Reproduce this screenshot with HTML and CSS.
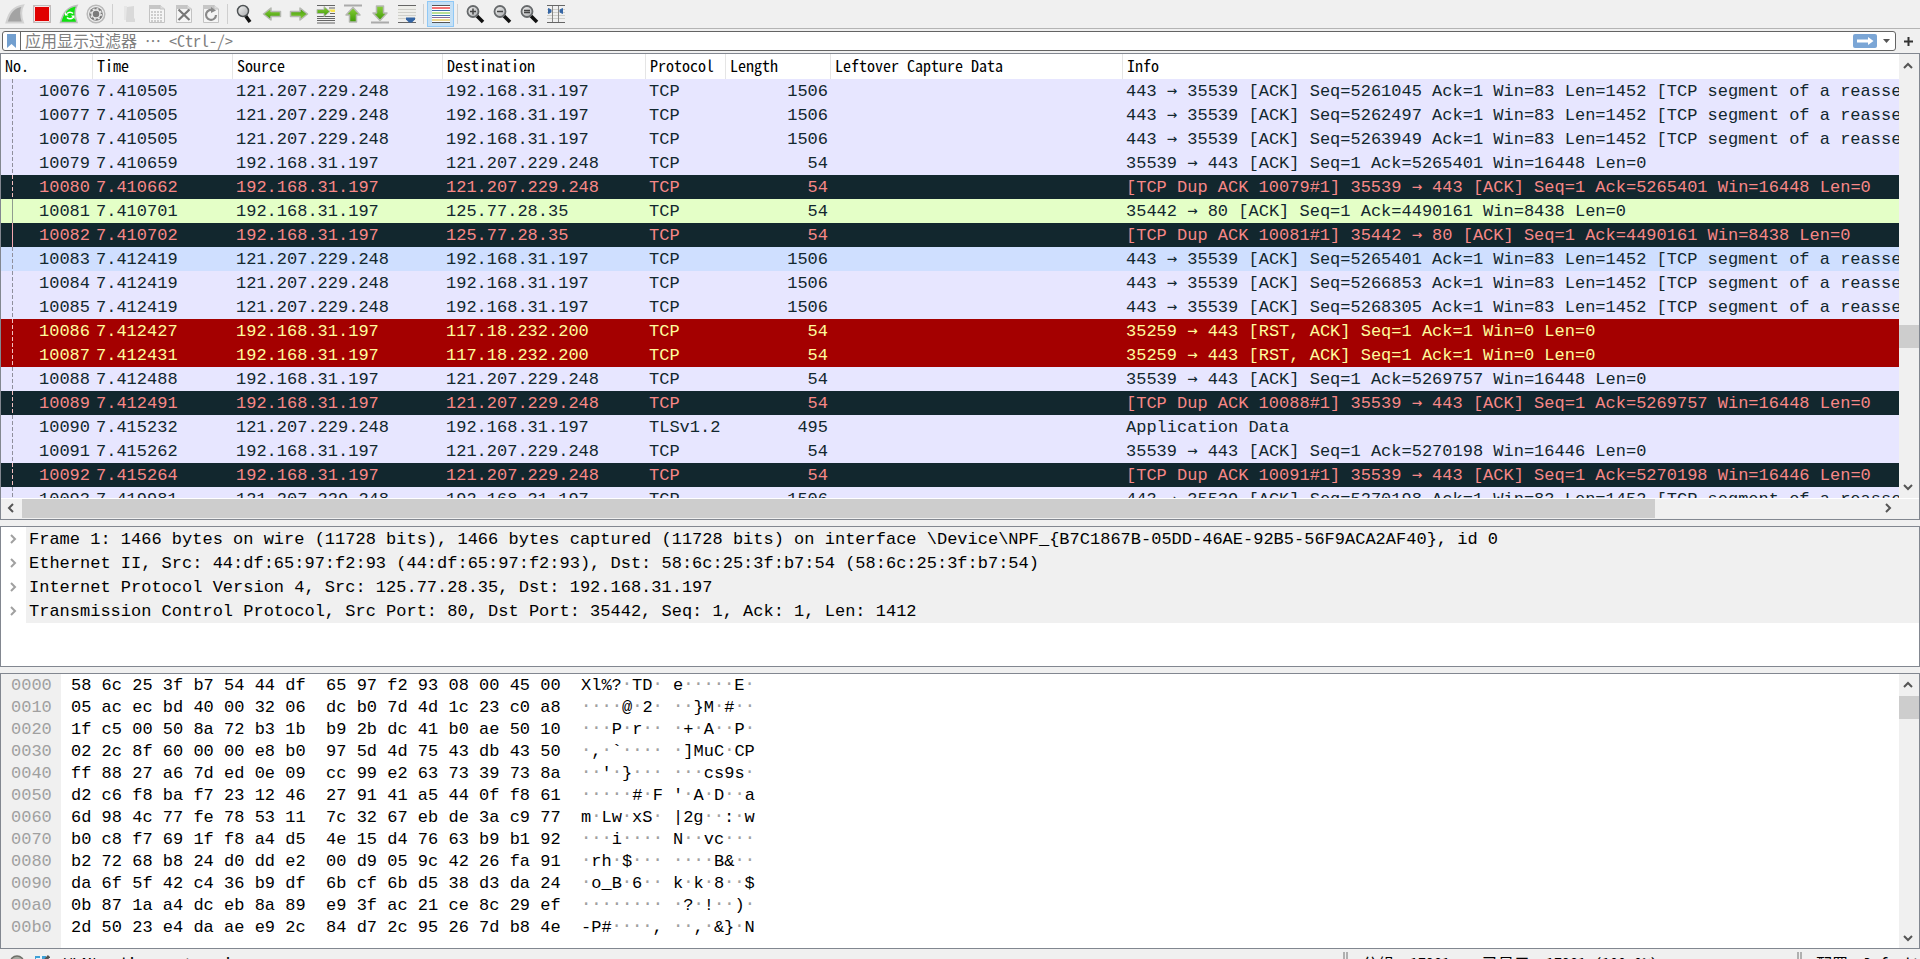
FILE: index.html
```
<!DOCTYPE html>
<html lang="zh-CN">
<head>
<meta charset="utf-8">
<title>WLAN</title>
<link rel="stylesheet" href="styles.css">
</head>
<body>
<svg width="0" height="0" class="defs" aria-hidden="true">
  <defs>
    <linearGradient id="green" x1="0" y1="0" x2="0" y2="1"><stop offset="0" stop-color="#8ad03a"/><stop offset="1" stop-color="#3f9a06"/></linearGradient>
    <linearGradient id="lens" x1="0" y1="0" x2="1" y2="1"><stop offset="0" stop-color="#f4f4f4"/><stop offset="1" stop-color="#a8aaac"/></linearGradient>
    <symbol id="arrow" viewBox="0 0 20 20"><path d="M1.500 10L9 4V7.500H18.500V12.500H9V16Z" fill="url(#green)" stroke="#b5b8b1" stroke-width="1.500" stroke-linejoin="round"/></symbol>
    <symbol id="mag" viewBox="0 0 20 20"><path d="M12 12L18 18" stroke="#111" stroke-width="3.500"/><circle cx="8" cy="7.500" r="5.500" fill="url(#lens)" stroke="#66696b" stroke-width="1.800"/></symbol>
    <symbol id="sheet" viewBox="0 0 20 20"><path d="M2.500 1.500H13L17.500 5V18.500H2.500Z" fill="#f5f5f5" stroke="#c3c3c3"/><path d="M2 1H13V5H2Z" fill="#c6c6c6"/><path d="M13 1V5H17.500" fill="#ddd" stroke="#c3c3c3"/></symbol>
  </defs>
</svg>
<div class="app">
  <div class="toolbar" role="toolbar">
    <button class="tool" aria-label="开始捕获"><svg viewBox="0 0 20 20"><path d="M1.500 18.500C4 9 8 3 18 1.500C15 7 16 13 18 18.500Z" fill="#a3a3a3" stroke="#d2d2d2" stroke-width="2"/></svg></button>
    <button class="tool" aria-label="停止捕获"><svg viewBox="0 0 20 20"><path d="M1.500 1.500H18.500V18.500H1.500Z" fill="#e00000" stroke="#bdbdbd"/><path d="M2.500 2.500H17.500V17.500H2.500Z" fill="none" stroke="#f6e4e4"/></svg></button>
    <button class="tool" aria-label="重新开始"><svg viewBox="0 0 20 20"><path d="M1.500 18.500C4 9 8 3 18 1.500C15 7 16 13 18 18.500Z" fill="#10e010" stroke="#bdbdbd" stroke-width="1.500"/><path d="M8 9.500A4 4 0 0 1 14 9.500M14 13.500A4 4 0 0 1 8 13.500" fill="none" stroke="#fff" stroke-width="1.500"/><path d="M6 8V11.500H9.500ZM15.500 15V11.500H12Z" fill="#fff"/></svg></button>
    <button class="tool" aria-label="捕获选项"><svg viewBox="0 0 20 20"><circle cx="10" cy="10" r="8.800" fill="#ededed" stroke="#b8b8b8" stroke-width="1.500"/><circle cx="10" cy="10" r="6.800" fill="#7b7b7b"/><circle cx="10" cy="10" r="4" fill="none" stroke="#e9e9e9" stroke-width="1.500"/><circle cx="10" cy="10" r="5.200" fill="none" stroke="#e9e9e9" stroke-width="1.500" stroke-dasharray="2 2.080"/></svg></button>
    <span class="sep"></span>
    <button class="tool" aria-label="打开"><svg viewBox="0 0 20 20"><path d="M4 2H7V16H4Z" fill="#e6e6e6"/><path d="M7 3L14 2V14L15 15V18H6V16Z" fill="#d9d9d9"/></svg></button>
    <button class="tool" aria-label="保存"><svg viewBox="0 0 20 20"><use href="#sheet"/><path d="M4 8H16M4 11H16M4 14H16M4 17H16" stroke="#cdcdcd" stroke-width="2" stroke-dasharray="2 1"/></svg></button>
    <button class="tool" aria-label="关闭"><svg viewBox="0 0 20 20"><use href="#sheet"/><path d="M4.500 5.500L15.500 16M15.500 5.500L4.500 16" stroke="#777" stroke-width="2.200"/></svg></button>
    <button class="tool" aria-label="重新加载"><svg viewBox="0 0 20 20"><use href="#sheet"/><path d="M12.500 6.500A5 5 0 1 0 15 11" fill="none" stroke="#8a8a8a" stroke-width="2.200"/><path d="M10 3L15 6.500L10 9Z" fill="#8a8a8a"/></svg></button>
    <span class="sep"></span>
    <button class="tool" aria-label="查找"><svg viewBox="0 0 20 20"><path d="M10 11L15 18" stroke="#111" stroke-width="3.500"/><circle cx="8" cy="7" r="5.500" fill="url(#lens)" stroke="#4f5355" stroke-width="1.500"/></svg></button>
    <button class="tool" aria-label="后退"><svg viewBox="0 0 20 20"><use href="#arrow"/></svg></button>
    <button class="tool" aria-label="前进"><svg viewBox="0 0 20 20"><use href="#arrow" transform="rotate(180 10 10)"/></svg></button>
    <button class="tool" aria-label="转到分组"><svg viewBox="0 0 20 20"><path d="M1 1.500H19M13 4H19M1 14.500H19M1 16.500H19M1 19H19M1 12.500H19M14 9.500H19" stroke="#656565" stroke-width="1.200"/><path d="M13 5.500H19V8H15Z" fill="#f7e34f"/><path d="M1 5.500H8V2.500L14 7.500L8 12.500V9.500H1Z" fill="url(#green)" stroke="#b5b8b1"/></svg></button>
    <button class="tool" aria-label="首个分组"><svg viewBox="0 0 20 20"><path d="M1 1.500H19" stroke="#aaa" stroke-width="2"/><path d="M10 3.500L17 11H13.500V18H6.500V11H3Z" fill="url(#green)" stroke="#b5b8b1" stroke-width="1.500" stroke-linejoin="round"/></svg></button>
    <button class="tool" aria-label="最新分组"><svg viewBox="0 0 20 20"><path d="M1 18.500H19" stroke="#aaa" stroke-width="2"/><path d="M10 16.500L17 9H13.500V2H6.500V9H3Z" fill="url(#green)" stroke="#b5b8b1" stroke-width="1.500" stroke-linejoin="round"/></svg></button>
    <button class="tool" aria-label="自动滚动"><svg viewBox="0 0 20 20"><path d="M1 2V16H19V2Z" fill="#eeeeea"/><path d="M1 5.500H19M1 8.500H19M1 11.500H19M1 14.500H19" stroke="#cfcfca"/><path d="M1 1.500H19M1 18.500H19" stroke="#666"/><path d="M9 13.500H18V15.500L15 18.500H12L9 15.500Z" fill="#3465a4"/></svg></button>
    <span class="sep"></span>
    <button class="tool active" aria-label="着色" aria-pressed="true"><svg viewBox="0 0 20 20"><path d="M1 1H19V19H1Z" fill="#fff"/><path d="M1 1.500H19M1 18.500H19" stroke="#555"/><path d="M1 4H19" stroke="#ef4444" stroke-width="1.500"/><path d="M1 6.500H19" stroke="#3f6fae"/><path d="M1 9H19" stroke="#72c12c"/><path d="M1 11.500H19" stroke="#4575ad"/><path d="M1 13.500H19" stroke="#8a6c9a"/><path d="M1 16H19" stroke="#d9ae1c"/></svg></button>
    <span class="sep"></span>
    <button class="tool" aria-label="放大"><svg viewBox="0 0 20 20"><use href="#mag"/><path d="M5 7.500H11M8 4.500V10.500" stroke="#444" stroke-width="1.500"/></svg></button>
    <button class="tool" aria-label="缩小"><svg viewBox="0 0 20 20"><use href="#mag"/><path d="M5 7.500H11" stroke="#444" stroke-width="1.500"/></svg></button>
    <button class="tool" aria-label="正常大小"><svg viewBox="0 0 20 20"><use href="#mag"/><path d="M5 6.500H11M5 8.500H11" stroke="#444" stroke-width="1.400"/></svg></button>
    <button class="tool" aria-label="调整列宽"><svg viewBox="0 0 20 20"><path d="M1 5.500H19M1 8.500H19M1 11.500H19M1 14.500H19" stroke="#cfcfca"/><path d="M1 1.500H19M1 18.500H19" stroke="#666"/><path d="M6.500 2V18M12.500 2V18" stroke="#888"/><path d="M2.500 4.500L5 6V8L2.500 9.500ZM16.500 4.500L14 6V8L16.500 9.500Z" fill="#3465a4" stroke="#3465a4"/></svg></button>
  </div>

  <form class="filterbar">
    <div class="filterbox">
      <button type="button" class="bookmark" aria-label="书签"><svg viewBox="0 0 9 14"><path d="M0 0H9V14L4.500 10L0 14Z" fill="#729fcf"/></svg></button>
      <input class="filter" type="text" aria-label="显示过滤器" placeholder="应用显示过滤器 … &lt;Ctrl-/&gt;">
      <button type="button" class="apply" aria-label="应用"><svg viewBox="0 0 24 14"><path d="M4 5.500H15V3L20.500 7L15 11V8.500H4Z" fill="#fff"/></svg></button>
      <button type="button" class="drop" aria-label="历史"><svg viewBox="0 0 7 4"><path d="M0 0H7L3.500 4Z" fill="#555"/></svg></button>
    </div>
    <button type="button" class="add" aria-label="添加过滤器"><svg viewBox="0 0 9 9"><path d="M4.500 0V9M0 4.500H9" stroke="#333" stroke-width="2"/></svg></button>
  </form>

  <section class="pane list">
    <div class="listrow">
      <div class="tablewrap">
        <table class="packets">
          <colgroup><col class="c-no"><col class="c-time"><col class="c-addr"><col class="c-dst"><col class="c-proto"><col class="c-len"><col class="c-left"><col></colgroup>
          <thead><tr><th>No.</th><th>Time</th><th>Source</th><th>Destination</th><th>Protocol</th><th>Length</th><th>Leftover Capture Data</th><th>Info</th></tr></thead>
          <tbody>
            <tr><td>10076</td><td>7.410505</td><td>121.207.229.248</td><td>192.168.31.197</td><td>TCP</td><td>1506</td><td></td><td>443 <i>→</i> 35539 [ACK] Seq=5261045 Ack=1 Win=83 Len=1452 [TCP segment of a reassembled PDU]</td></tr>
            <tr><td>10077</td><td>7.410505</td><td>121.207.229.248</td><td>192.168.31.197</td><td>TCP</td><td>1506</td><td></td><td>443 <i>→</i> 35539 [ACK] Seq=5262497 Ack=1 Win=83 Len=1452 [TCP segment of a reassembled PDU]</td></tr>
            <tr><td>10078</td><td>7.410505</td><td>121.207.229.248</td><td>192.168.31.197</td><td>TCP</td><td>1506</td><td></td><td>443 <i>→</i> 35539 [ACK] Seq=5263949 Ack=1 Win=83 Len=1452 [TCP segment of a reassembled PDU]</td></tr>
            <tr><td>10079</td><td>7.410659</td><td>192.168.31.197</td><td>121.207.229.248</td><td>TCP</td><td>54</td><td></td><td>35539 <i>→</i> 443 [ACK] Seq=1 Ack=5265401 Win=16448 Len=0</td></tr>
            <tr class="bad"><td>10080</td><td>7.410662</td><td>192.168.31.197</td><td>121.207.229.248</td><td>TCP</td><td>54</td><td></td><td>[TCP Dup ACK 10079#1] 35539 <i>→</i> 443 [ACK] Seq=1 Ack=5265401 Win=16448 Len=0</td></tr>
            <tr class="http related"><td>10081</td><td>7.410701</td><td>192.168.31.197</td><td>125.77.28.35</td><td>TCP</td><td>54</td><td></td><td>35442 <i>→</i> 80 [ACK] Seq=1 Ack=4490161 Win=8438 Len=0</td></tr>
            <tr class="bad related"><td>10082</td><td>7.410702</td><td>192.168.31.197</td><td>125.77.28.35</td><td>TCP</td><td>54</td><td></td><td>[TCP Dup ACK 10081#1] 35442 <i>→</i> 80 [ACK] Seq=1 Ack=4490161 Win=8438 Len=0</td></tr>
            <tr class="hover"><td>10083</td><td>7.412419</td><td>121.207.229.248</td><td>192.168.31.197</td><td>TCP</td><td>1506</td><td></td><td>443 <i>→</i> 35539 [ACK] Seq=5265401 Ack=1 Win=83 Len=1452 [TCP segment of a reassembled PDU]</td></tr>
            <tr><td>10084</td><td>7.412419</td><td>121.207.229.248</td><td>192.168.31.197</td><td>TCP</td><td>1506</td><td></td><td>443 <i>→</i> 35539 [ACK] Seq=5266853 Ack=1 Win=83 Len=1452 [TCP segment of a reassembled PDU]</td></tr>
            <tr><td>10085</td><td>7.412419</td><td>121.207.229.248</td><td>192.168.31.197</td><td>TCP</td><td>1506</td><td></td><td>443 <i>→</i> 35539 [ACK] Seq=5268305 Ack=1 Win=83 Len=1452 [TCP segment of a reassembled PDU]</td></tr>
            <tr class="rst"><td>10086</td><td>7.412427</td><td>192.168.31.197</td><td>117.18.232.200</td><td>TCP</td><td>54</td><td></td><td>35259 <i>→</i> 443 [RST, ACK] Seq=1 Ack=1 Win=0 Len=0</td></tr>
            <tr class="rst"><td>10087</td><td>7.412431</td><td>192.168.31.197</td><td>117.18.232.200</td><td>TCP</td><td>54</td><td></td><td>35259 <i>→</i> 443 [RST, ACK] Seq=1 Ack=1 Win=0 Len=0</td></tr>
            <tr><td>10088</td><td>7.412488</td><td>192.168.31.197</td><td>121.207.229.248</td><td>TCP</td><td>54</td><td></td><td>35539 <i>→</i> 443 [ACK] Seq=1 Ack=5269757 Win=16448 Len=0</td></tr>
            <tr class="bad"><td>10089</td><td>7.412491</td><td>192.168.31.197</td><td>121.207.229.248</td><td>TCP</td><td>54</td><td></td><td>[TCP Dup ACK 10088#1] 35539 <i>→</i> 443 [ACK] Seq=1 Ack=5269757 Win=16448 Len=0</td></tr>
            <tr><td>10090</td><td>7.415232</td><td>121.207.229.248</td><td>192.168.31.197</td><td>TLSv1.2</td><td>495</td><td></td><td>Application Data</td></tr>
            <tr><td>10091</td><td>7.415262</td><td>192.168.31.197</td><td>121.207.229.248</td><td>TCP</td><td>54</td><td></td><td>35539 <i>→</i> 443 [ACK] Seq=1 Ack=5270198 Win=16446 Len=0</td></tr>
            <tr class="bad"><td>10092</td><td>7.415264</td><td>192.168.31.197</td><td>121.207.229.248</td><td>TCP</td><td>54</td><td></td><td>[TCP Dup ACK 10091#1] 35539 <i>→</i> 443 [ACK] Seq=1 Ack=5270198 Win=16446 Len=0</td></tr>
            <tr><td>10093</td><td>7.419981</td><td>121.207.229.248</td><td>192.168.31.197</td><td>TCP</td><td>1506</td><td></td><td>443 <i>→</i> 35539 [ACK] Seq=5270198 Ack=1 Win=83 Len=1452 [TCP segment of a reassembled PDU]</td></tr>
          </tbody>
        </table>
      </div>
      <div class="vbar">
        <button class="sbtn" aria-label="向上"><svg viewBox="0 0 10 7"><path d="M1 6L5 2L9 6" class="chev"/></svg></button>
        <div class="track"><span class="before-list"></span><span class="thumb"></span></div>
        <button class="sbtn" aria-label="向下"><svg viewBox="0 0 10 7"><path d="M1 1L5 5L9 1" class="chev"/></svg></button>
      </div>
    </div>
    <div class="hbar">
      <button class="hbtn" aria-label="向左"><svg viewBox="0 0 7 10"><path d="M6 1L2 5L6 9" class="chev"/></svg></button>
      <div class="htrack"><span class="hthumb"></span></div>
      <button class="hbtn" aria-label="向右"><svg viewBox="0 0 7 10"><path d="M1 1L5 5L1 9" class="chev"/></svg></button>
      <span class="corner"></span>
    </div>
  </section>

  <section class="pane details">
    <ul class="tree" role="tree">
      <li role="treeitem"><svg viewBox="0 0 7 10"><path d="M1 1L5 5L1 9" class="twist"/></svg><span>Frame 1: 1466 bytes on wire (11728 bits), 1466 bytes captured (11728 bits) on interface \Device\NPF_{B7C1867B-05DD-46AE-92B5-56F9ACA2AF40}, id 0</span></li>
      <li role="treeitem"><svg viewBox="0 0 7 10"><path d="M1 1L5 5L1 9" class="twist"/></svg><span>Ethernet II, Src: 44:df:65:97:f2:93 (44:df:65:97:f2:93), Dst: 58:6c:25:3f:b7:54 (58:6c:25:3f:b7:54)</span></li>
      <li role="treeitem"><svg viewBox="0 0 7 10"><path d="M1 1L5 5L1 9" class="twist"/></svg><span>Internet Protocol Version 4, Src: 125.77.28.35, Dst: 192.168.31.197</span></li>
      <li role="treeitem"><svg viewBox="0 0 7 10"><path d="M1 1L5 5L1 9" class="twist"/></svg><span>Transmission Control Protocol, Src Port: 80, Dst Port: 35442, Seq: 1, Ack: 1, Len: 1412</span></li>
    </ul>
  </section>

  <section class="pane bytes">
    <pre class="offsets">0000
0010
0020
0030
0040
0050
0060
0070
0080
0090
00a0
00b0</pre>
    <pre class="hex">58 6c 25 3f b7 54 44 df  65 97 f2 93 08 00 45 00
05 ac ec bd 40 00 32 06  dc b0 7d 4d 1c 23 c0 a8
1f c5 00 50 8a 72 b3 1b  b9 2b dc 41 b0 ae 50 10
02 2c 8f 60 00 00 e8 b0  97 5d 4d 75 43 db 43 50
ff 88 27 a6 7d ed 0e 09  cc 99 e2 63 73 39 73 8a
d2 c6 f8 ba f7 23 12 46  27 91 41 a5 44 0f f8 61
6d 98 4c 77 fe 78 53 11  7c 32 67 eb de 3a c9 77
b0 c8 f7 69 1f f8 a4 d5  4e 15 d4 76 63 b9 b1 92
b2 72 68 b8 24 d0 dd e2  00 d9 05 9c 42 26 fa 91
da 6f 5f 42 c4 36 b9 df  6b cf 6b d5 38 d3 da 24
0b 87 1a a4 dc eb 8a 89  e9 3f ac 21 ce 8c 29 ef
2d 50 23 e4 da ae e9 2c  84 d7 2c 95 26 7d b8 4e</pre>
    <pre class="ascii">Xl%?<i>·</i>TD<i>·</i> e<i>·····</i>E<i>·</i>
<i>····</i>@<i>·</i>2<i>·</i> <i>··</i>}M<i>·</i>#<i>··</i>
<i>···</i>P<i>·</i>r<i>··</i> <i>·</i>+<i>·</i>A<i>··</i>P<i>·</i>
<i>·</i>,<i>·</i>`<i>····</i> <i>·</i>]MuC<i>·</i>CP
<i>··</i>'<i>·</i>}<i>···</i> <i>···</i>cs9s<i>·</i>
<i>·····</i>#<i>·</i>F '<i>·</i>A<i>·</i>D<i>··</i>a
m<i>·</i>Lw<i>·</i>xS<i>·</i> |2g<i>··</i>:<i>·</i>w
<i>···</i>i<i>····</i> N<i>··</i>vc<i>···</i>
<i>·</i>rh<i>·</i>$<i>···</i> <i>····</i>B&amp;<i>··</i>
<i>·</i>o_B<i>·</i>6<i>··</i> k<i>·</i>k<i>·</i>8<i>··</i>$
<i>········</i> <i>·</i>?<i>·</i>!<i>··</i>)<i>·</i>
-P#<i>····</i>, <i>··</i>,<i>·</i>&amp;}<i>·</i>N</pre>
    <div class="vbar">
      <button class="sbtn" aria-label="向上"><svg viewBox="0 0 10 7"><path d="M1 6L5 2L9 6" class="chev"/></svg></button>
      <div class="track"><span class="thumb"></span></div>
      <button class="sbtn" aria-label="向下"><svg viewBox="0 0 10 7"><path d="M1 1L5 5L9 1" class="chev"/></svg></button>
    </div>
  </section>

  <footer class="status">
    <button class="sicon" aria-label="专家信息"><svg viewBox="0 0 16 16"><circle cx="8" cy="8" r="7" fill="#a6aaa2" stroke="#6e7069" stroke-width="1.500"/></svg></button>
    <button class="sicon" aria-label="捕获文件注释"><svg viewBox="0 0 16 16"><path d="M1 1H12V15H1Z" fill="#3fa0d6"/><path d="M2 3H6V1H8V4H2Z" fill="#e8f4fb"/><path d="M15 1L6 11" stroke="#555" stroke-width="3"/></svg></button>
    <span class="source">WLAN: &lt;live capture in progress&gt;</span>
    <span class="count">分组: 17281 · 已显示: 17281 (100.0%)</span>
    <span class="profile">配置: Default</span>
  </footer>
</div>
</body>
</html>
```
FILE: styles.css
```
* { box-sizing: border-box; }

body {
  margin: 0;
  overflow: hidden;
  background: #f0f0f0;
  color: #000;
  font-family: "Liberation Mono", "Noto Sans CJK SC", monospace;
  font-size: 17px;
}

/* Arrows and placeholder dots of the packet text. */
i {
  font-family: "DejaVu Sans Mono", monospace;
  font-style: normal;
  line-height: 0;
}

button {
  display: flex;
  align-items: center;
  justify-content: center;
  margin: 0;
  padding: 0;
  border: 0;
  background: none;
}

svg { display: block; flex: none; }
.defs { position: absolute; }

/* The status bar runs past the lower edge of the window. */
.app {
  display: flex;
  flex-direction: column;
  height: calc(100vh + 16px);
}

.toolbar {
  display: flex;
  flex: none;
  align-items: center;
  height: 29px;
  padding-left: 1px;
  border-bottom: 1px solid #b4b4b4;
}

.tool { width: 27px; height: 26px; border: 1px solid transparent; }
.tool svg { width: 20px; height: 20px; }
.tool.active { background: #c5e0f5; border-color: #90c8f6; }
.sep { width: 1px; height: 20px; margin: 0 3px; background: #cfcfcf; }

.filterbar {
  display: flex;
  flex: none;
  align-items: center;
  height: 24px;
  margin: 0;
  padding-left: 2px;
}

.filterbox {
  display: flex;
  flex: 1;
  align-items: center;
  height: 20px;
  border: 1px solid #646464;
  border-radius: 3px;
  background: #fff;
}

.bookmark { width: 18px; height: 18px; border-right: 1px solid #646464; }
.bookmark svg { width: 9px; height: 14px; }

.filter {
  flex: 1;
  min-width: 0;
  height: 18px;
  padding: 0 4px 2px;
  border: 0;
  outline: 0;
  background: none;
  font-family: "Noto Sans Mono CJK SC", "Noto Sans CJK SC", monospace;
  font-size: 16px;
  line-height: 16px;
}
.filter::placeholder { color: #808080; }

.apply { width: 24px; height: 14px; border-radius: 2px; background: #7ba6d6; }
.apply svg { width: 24px; height: 14px; }
.drop { width: 18px; height: 18px; }
.drop svg { width: 7px; height: 4px; }
.add { width: 24px; height: 20px; }
.add svg { width: 9px; height: 9px; }

.pane {
  min-height: 0;
  border: 1px solid #828790;
  background: #fff;
  overflow: hidden;
}

.list { display: flex; flex: 468 1 0; flex-direction: column; margin-bottom: 6px; }
.listrow { display: flex; flex: 1; min-height: 0; }
.tablewrap { flex: 1; min-width: 0; overflow: hidden; }

.packets { width: 100%; table-layout: fixed; border-collapse: separate; border-spacing: 0; }
.c-no { width: 92px; }
.c-time { width: 140px; }
.c-addr { width: 210px; }
.c-dst { width: 203px; }
.c-proto { width: 80px; }
.c-len { width: 105px; }
.c-left { width: 292px; }

.packets th {
  height: 25px;
  padding: 0 4px 3px;
  border-right: 1px solid #e5e5e5;
  font-family: "Noto Sans Mono CJK SC", "Noto Sans CJK SC", monospace;
  font-size: 16px;
  font-weight: 400;
  line-height: 22px;
  text-align: left;
  white-space: nowrap;
}
.packets th:last-child { border-right: 0; }

.packets td {
  height: 24px;
  padding: 2px 3px 0;
  line-height: 22px;
  overflow: hidden;
  white-space: nowrap;
}
.packets td:nth-child(6) { text-align: right; }
.packets td:first-child {
  text-align: right;
  background: repeating-linear-gradient(to bottom, #8f8f9c 0 4px, transparent 4px 6px) 11px 0 / 1px 100% no-repeat;
}
.packets tbody tr { background: #e7e6ff; color: #12272e; }
.packets tr.bad { background: #12272e; color: #f78787; }
.packets tr.http { background: #e4ffc7; }
.packets tr.hover { background: #cfdfff; }
.packets tr.rst { background: #a40000; color: #fffc9c; }
.packets tr.bad td:first-child,
.packets tr.rst td:first-child { background-image: repeating-linear-gradient(to bottom, #f3c0c0 0 4px, transparent 4px 6px); }
.packets tr.related td:first-child { background-image: linear-gradient(#8f9c8f, #8f9c8f); }
.packets tr.bad.related td:first-child { background-image: linear-gradient(#f3a8b0, #f3a8b0); }

.vbar { display: flex; flex: none; flex-direction: column; width: 20px; background: #f0f0f0; }
.sbtn { width: 18px; height: 22px; }
.sbtn:last-child { height: 20px; }
.sbtn svg { width: 10px; height: 7px; }
.chev { fill: none; stroke: #555; stroke-width: 2; }
.track { display: flex; flex: 1; flex-direction: column; }
.before-list { flex: 0 0 62%; }
.thumb { height: 23px; background: #cdcdcd; }

.hbar { display: flex; flex: none; height: 21px; padding-bottom: 1px; background: #f0f0f0; border-top: 1px solid #fff; }
.hbtn { width: 21px; }
.hbtn:first-child { padding-right: 2px; }
.hbtn svg { width: 7px; height: 10px; }
.htrack { flex: 1; display: flex; }
.hthumb { width: 88%; background: #cdcdcd; }
.corner { width: 20px; }

.details { flex: 140 1 0; margin-bottom: 6px; }
.tree { margin: 0; padding: 0; list-style: none; }
.tree li { display: flex; align-items: center; height: 24px; }
.tree svg { width: 7px; height: 10px; margin: 0 9px; }
.twist { fill: none; stroke: #a0a0a0; stroke-width: 2; }
.tree span { flex: 1; padding: 2px 0 0 3px; background: #f0f0f0; line-height: 22px; white-space: nowrap; }

.bytes { display: flex; flex: 276 1 0; }
.bytes pre { margin: 0; padding-top: 1px; font-family: inherit; line-height: 22px; }
.bytes i { color: #a0a0a0; }
.offsets { width: 60px; padding-left: 10px; background: #f0f0f0; }
.bytes .offsets { color: #a0a0a0; }
.hex { width: 520px; padding-left: 10px; }
.ascii { flex: 1; }

.status {
  display: flex;
  flex: none;
  align-items: stretch;
  height: 26px;
  padding-top: 3px;
  font-family: "Noto Sans Mono CJK SC", "Noto Sans CJK SC", monospace;
  font-size: 16px;
  line-height: 23px;
  white-space: nowrap;
}
.sicon { width: 24px; height: 22px; padding-left: 10px; }
.sicon + .sicon { padding-left: 12px; }
.sicon svg { width: 16px; height: 16px; }
.source { flex: 1; padding-left: 16px; }
.count, .profile { border-left: 5px double #b0b0b0; padding-left: 14px; }
.count { width: 454px; }
.profile { width: 123px; }
```
